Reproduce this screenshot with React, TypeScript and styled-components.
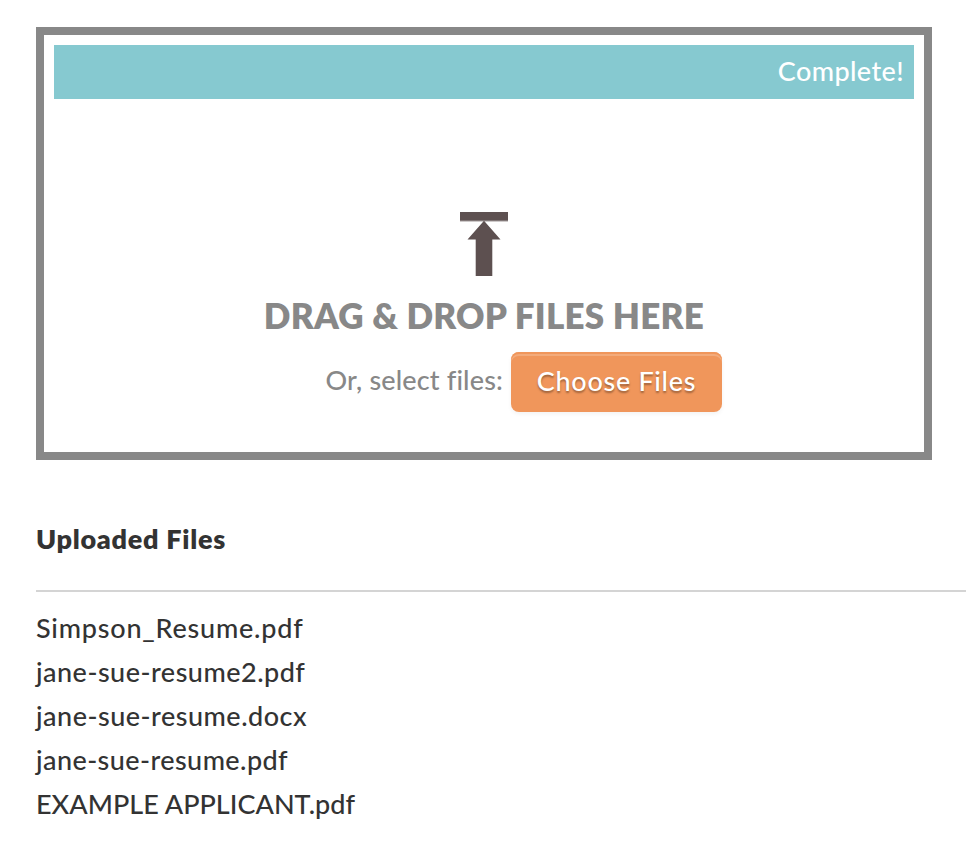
import React from "react";
import styled, { createGlobalStyle } from "styled-components";

const GlobalStyle = createGlobalStyle`
  *, *::before, *::after { box-sizing: border-box; }
  body {
    margin: 0;
    background: #fff;
    color: #333;
    font: 500 27px/44px "Lato", "Liberation Sans", sans-serif;
    overflow-x: hidden;
  }
`;

const Page = styled.main`
  height: 868px;
  padding: 27px 0 0 36px;
`;

const DropZone = styled.section`
  display: flex;
  flex-direction: column;
  align-items: center;
  width: 896px;
  height: 433px;
  padding: 10px;
  border: 8px solid #888;
  color: #888;
`;

const ProgressBar = styled.div`
  align-self: stretch;
  height: 54px;
  padding-right: 10px;
  background: #86c9d0;
  color: #fff;
  line-height: 52px;
  letter-spacing: 0.4px;
  text-align: right;
`;

const UploadIcon = styled.svg`
  display: block;
  width: 48px;
  height: 64px;
  margin-top: 113px;
`;

const DropTitle = styled.h2`
  margin: 19px 0 0;
  font-size: 35px;
  font-weight: 800;
  line-height: 41px;
  letter-spacing: 0.25px;
`;

const SelectRow = styled.div`
  display: flex;
  align-items: flex-start;
  justify-content: flex-end;
  gap: 8px;
  width: 476px;
  margin-top: 16px;
`;

const SelectLabel = styled.span`
  line-height: 55px;
  letter-spacing: 0.15px;
  white-space: nowrap;
`;

const ChooseButton = styled.button`
  width: 211px;
  height: 60px;
  padding: 0 0 2px;
  border: 0;
  border-radius: 8px;
  background: #f0965b;
  box-shadow: inset 0 2px 0 #f0965b, inset 0 4px 0 rgba(255, 255, 255, 0.2), 0 2px 4px rgba(0, 0, 0, 0.05);
  color: #fff;
  font: inherit;
  line-height: 58px;
  letter-spacing: 0.7px;
  text-shadow: 0 2px 2px rgba(0, 0, 0, 0.35);
  white-space: nowrap;
`;

const ListTitle = styled.h3`
  margin: 55px 0 0;
  height: 77px;
  border-bottom: 2px solid #d4d4d4;
  font-size: 27px;
  font-weight: 800;
  line-height: 48px;
  letter-spacing: 0.72px;
`;

const FileList = styled.ul`
  margin: 14px 0 0;
  padding: 0;
  list-style: none;
`;

const FileItem = styled.li<{ $tracking: number }>`
  height: 44px;
  letter-spacing: ${(p) => p.$tracking}px;
`;

const files = [
  { name: "Simpson_Resume.pdf", tracking: 0.78 },
  { name: "jane-sue-resume2.pdf", tracking: 0.48 },
  { name: "jane-sue-resume.docx", tracking: 0.49 },
  { name: "jane-sue-resume.pdf", tracking: 0.42 },
  { name: "EXAMPLE APPLICANT.pdf", tracking: 0.02 },
];

export default function App() {
  return (
    <Page>
      <GlobalStyle />
      <DropZone>
        <ProgressBar>Complete!</ProgressBar>
        <UploadIcon viewBox="0 0 48 64" fill="#5d5050" aria-hidden="true">
          <path d="M0 0H48V8.8H0Z" />
          <path d="M0 8.8H48V10H0Z" opacity="0.3" />
          <path d="M24 8.8L40.5 27.6H32.3V64H15.7V27.6H7.5Z" />
        </UploadIcon>
        <DropTitle>DRAG &amp; DROP FILES HERE</DropTitle>
        <SelectRow>
          <SelectLabel>Or, select files:</SelectLabel>
          <ChooseButton type="button">Choose Files</ChooseButton>
        </SelectRow>
      </DropZone>
      <ListTitle>Uploaded Files</ListTitle>
      <FileList>
        {files.map((file) => (
          <FileItem key={file.name} $tracking={file.tracking}>
            {file.name}
          </FileItem>
        ))}
      </FileList>
    </Page>
  );
}
